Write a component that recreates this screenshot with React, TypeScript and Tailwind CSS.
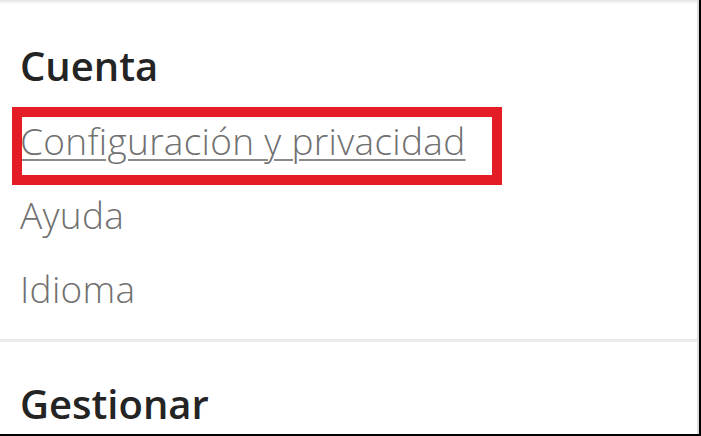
const links = ["Configuración y privacidad", "Ayuda", "Idioma"];

const App = () => {
  return (
    <div
      className="relative w-[701px] h-[436px] overflow-hidden bg-white border-r-2 border-b-2 border-black"
      style={{ fontFamily: '"Open Sans", "Noto Sans", sans-serif' }}
    >
      <div className="h-[4px] bg-gradient-to-b from-[#e4e4e4] to-white" />
      <div className="pl-[20px]">
        <h2 className="mt-[34px] text-[40px] leading-[56px] font-semibold text-[#242424]">
          Cuenta
        </h2>
        <ul className="mt-[10px]">
          {links.map((label, i) => (
            <li
              key={label}
              className="relative h-[74px] text-[37px] leading-[74px] tracking-[0.3px] font-[350] text-[#707070]"
            >
              <span
                className={
                  i === 0
                    ? "underline decoration-[2px] underline-offset-[4px] decoration-[#8a8a8a]"
                    : ""
                }
              >
                {label}
              </span>
              {i === 0 && (
                <div className="absolute left-[-8px] top-[3px] w-[490px] h-[78px] border-[10px] border-[#e31c25]" />
              )}
            </li>
          ))}
        </ul>
      </div>
      <div className="mt-[13px] h-[3px] bg-[#ebebeb]" />
      <div className="pl-[20px]">
        <h2 className="mt-[34px] text-[40px] leading-[56px] font-semibold text-[#242424]">
          Gestionar
        </h2>
      </div>
      <div className="absolute top-0 right-0 h-full w-[2px] bg-[#dcdcdc]" />
    </div>
  );
};

export default App;
